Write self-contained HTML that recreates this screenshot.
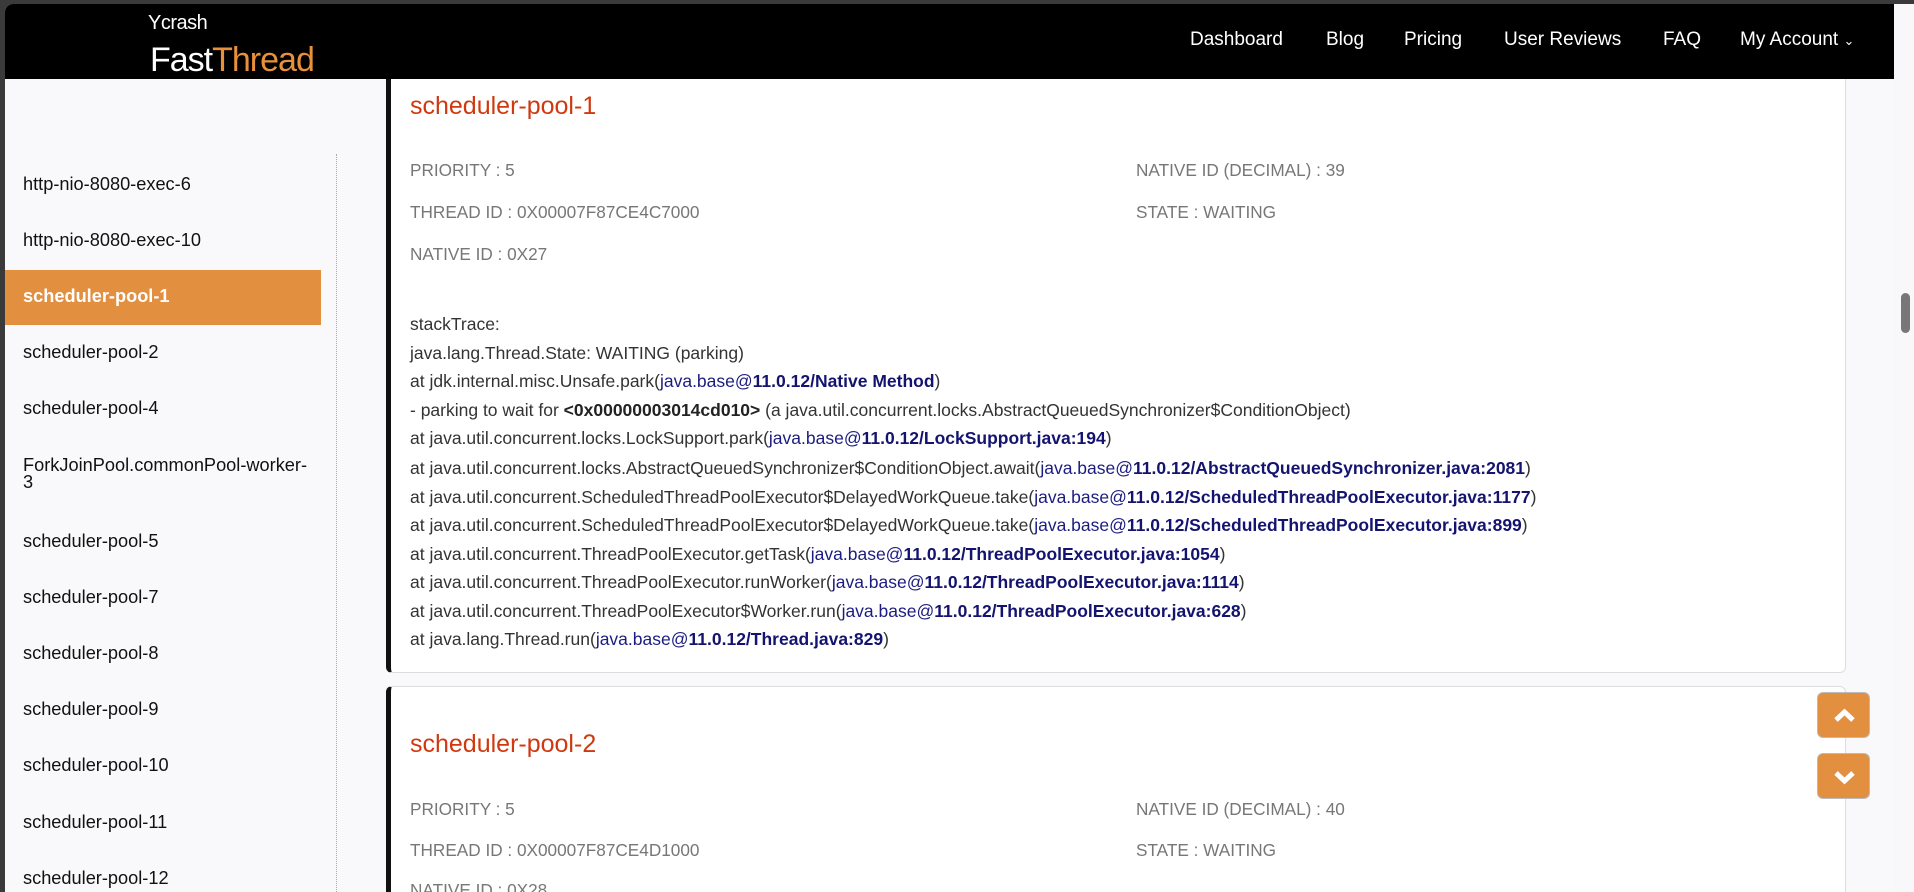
<!DOCTYPE html>
<html><head><meta charset="utf-8"><style>
*{margin:0;padding:0;box-sizing:border-box}
html{overflow:hidden;height:892px}
body{width:1914px;height:892px;overflow:hidden;background:#3a3a3a;font-family:"Liberation Sans",sans-serif;position:relative}
#page{position:absolute;left:5px;top:4px;width:1909px;height:888px;background:#f9f9fb;border-top-left-radius:8px;overflow:hidden}
#hdr{position:absolute;left:0;top:0;width:1889px;height:75px;background:#000;z-index:5}
.abs{position:absolute;white-space:nowrap}
.nav{color:#fff;font-size:19px;top:25px}
.side{left:18px;font-size:18.2px;color:#111;line-height:19px}
#dots{position:absolute;left:331px;top:150px;height:740px;border-left:1px dotted #aaa}
.card{position:absolute;left:381px;width:1460px;background:#fff;border:1px solid #ddd;border-left:5px solid #111;border-radius:6px}
.t{color:#d0390f;font-size:25px;left:410px}
.f{color:#777;font-size:17.2px}
.s{left:410px;font-size:17.5px;color:#333}
.s a{color:#1c1c80;text-decoration:none}
.s b{color:#141470}
.btn{position:absolute;left:1817px;width:53px;height:46px;background:#e28f40;border:1px solid #bbb;border-radius:6px}
</style></head><body>
<div id="page">
<div id="hdr">
 <div class="abs" style="left:143px;top:8px;color:#fff;font-size:20px;letter-spacing:-0.5px">Ycrash</div>
 <div class="abs" style="left:145px;top:37px;color:#fff;font-size:34px;letter-spacing:-1px">Fast<span style="color:#e8913a">Thread</span></div>
 <div class="abs nav" style="left:1185px">Dashboard</div>
 <div class="abs nav" style="left:1321px">Blog</div>
 <div class="abs nav" style="left:1399px">Pricing</div>
 <div class="abs nav" style="left:1499px">User Reviews</div>
 <div class="abs nav" style="left:1658px">FAQ</div>
 <div class="abs nav" style="left:1735px">My Account <span style="font-size:13px">&#8964;</span></div>
</div>
<div id="dots"></div>
<div style="position:absolute;left:0;top:266px;width:316px;height:55px;background:#e28f40"></div>
<div class="abs side" style="top:171px">http-nio-8080-exec-6</div>
<div class="abs side" style="top:227px">http-nio-8080-exec-10</div>
<div class="abs side" style="top:283px;color:#fff;font-weight:bold">scheduler-pool-1</div>
<div class="abs side" style="top:339px">scheduler-pool-2</div>
<div class="abs side" style="top:395px">scheduler-pool-4</div>
<div class="abs side" style="top:453px;line-height:17px">ForkJoinPool.commonPool-worker-<br>3</div>
<div class="abs side" style="top:528px">scheduler-pool-5</div>
<div class="abs side" style="top:584px">scheduler-pool-7</div>
<div class="abs side" style="top:640px">scheduler-pool-8</div>
<div class="abs side" style="top:696px">scheduler-pool-9</div>
<div class="abs side" style="top:752px">scheduler-pool-10</div>
<div class="abs side" style="top:809px">scheduler-pool-11</div>
<div class="abs side" style="top:865px">scheduler-pool-12</div>

<div class="card" style="top:-20px;height:689px"></div>
<div class="card" style="top:682px;height:300px"></div>
<div style="position:absolute;left:1889px;top:0;width:20px;height:888px;background:#f8f8fa"></div>
<div style="position:absolute;left:1896px;top:289px;width:9px;height:40px;background:#777;border-radius:5px"></div>
</div>
<div class="abs t" style="top:92px">scheduler-pool-1</div>
<div class="abs f" style="left:410px;top:160px">PRIORITY : 5</div>
<div class="abs f" style="left:1136px;top:160px">NATIVE ID (DECIMAL) : 39</div>
<div class="abs f" style="left:410px;top:202px">THREAD ID : 0X00007F87CE4C7000</div>
<div class="abs f" style="left:1136px;top:202px">STATE : WAITING</div>
<div class="abs f" style="left:410px;top:244px">NATIVE ID : 0X27</div>
<div class="abs s" style="top:314px">stackTrace:</div>
<div class="abs s" style="top:343px">java.lang.Thread.State: WAITING (parking)</div>
<div class="abs s" style="top:371px">at jdk.internal.misc.Unsafe.park(<a>java.base@<b>11.0.12/Native Method</b></a>)</div>
<div class="abs s" style="top:400px">- parking to wait for <b style="color:#222">&lt;0x00000003014cd010&gt;</b> (a java.util.concurrent.locks.AbstractQueuedSynchronizer$ConditionObject)</div>
<div class="abs s" style="top:428px">at java.util.concurrent.locks.LockSupport.park(<a>java.base@<b>11.0.12/LockSupport.java:194</b></a>)</div>
<div class="abs s" style="top:458px">at java.util.concurrent.locks.AbstractQueuedSynchronizer$ConditionObject.await(<a>java.base@<b>11.0.12/AbstractQueuedSynchronizer.java:2081</b></a>)</div>
<div class="abs s" style="top:487px">at java.util.concurrent.ScheduledThreadPoolExecutor$DelayedWorkQueue.take(<a>java.base@<b>11.0.12/ScheduledThreadPoolExecutor.java:1177</b></a>)</div>
<div class="abs s" style="top:515px">at java.util.concurrent.ScheduledThreadPoolExecutor$DelayedWorkQueue.take(<a>java.base@<b>11.0.12/ScheduledThreadPoolExecutor.java:899</b></a>)</div>
<div class="abs s" style="top:544px">at java.util.concurrent.ThreadPoolExecutor.getTask(<a>java.base@<b>11.0.12/ThreadPoolExecutor.java:1054</b></a>)</div>
<div class="abs s" style="top:572px">at java.util.concurrent.ThreadPoolExecutor.runWorker(<a>java.base@<b>11.0.12/ThreadPoolExecutor.java:1114</b></a>)</div>
<div class="abs s" style="top:601px">at java.util.concurrent.ThreadPoolExecutor$Worker.run(<a>java.base@<b>11.0.12/ThreadPoolExecutor.java:628</b></a>)</div>
<div class="abs s" style="top:629px">at java.lang.Thread.run(<a>java.base@<b>11.0.12/Thread.java:829</b></a>)</div>

<div class="abs t" style="top:730px">scheduler-pool-2</div>
<div class="abs f" style="left:410px;top:799px">PRIORITY : 5</div>
<div class="abs f" style="left:1136px;top:799px">NATIVE ID (DECIMAL) : 40</div>
<div class="abs f" style="left:410px;top:840px">THREAD ID : 0X00007F87CE4D1000</div>
<div class="abs f" style="left:1136px;top:840px">STATE : WAITING</div>
<div class="abs f" style="left:410px;top:880px;height:12px;overflow:hidden">NATIVE ID : 0X28</div>

<div class="btn" style="top:692px"><svg width="53" height="46"><path d="M18 27 L26.5 19 L35 27" stroke="#fff" stroke-width="5" fill="none"/></svg></div>
<div class="btn" style="top:753px"><svg width="53" height="46"><path d="M18 19 L26.5 27 L35 19" stroke="#fff" stroke-width="5" fill="none"/></svg></div>
</body></html>
